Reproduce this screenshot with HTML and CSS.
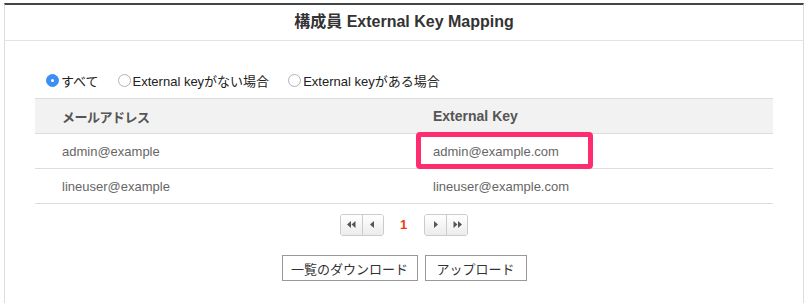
FILE: index.html
```html
<!DOCTYPE html>
<html lang="ja">
<head>
    <meta charset="UTF-8">
    <title>構成員 External Key Mapping</title>
    <link rel="stylesheet" href="styles.css">
</head>
<body>
    <div class="panel">
        <div class="panel-head">構成員 External Key Mapping</div>
        <div class="panel-body">
            <div class="filters">
                <label class="radio checked"><span class="dot"></span>すべて</label>
                <label class="radio"><span class="dot"></span>External keyがない場合</label>
                <label class="radio"><span class="dot"></span>External keyがある場合</label>
            </div>
            <table class="key-table">
                <thead>
                    <tr>
                        <th class="th-ja">メールアドレス</th>
                        <th>External Key</th>
                    </tr>
                </thead>
                <tbody>
                    <tr>
                        <td>admin@example</td>
                        <td class="marked"><span class="highlight"></span>admin@example.com</td>
                    </tr>
                    <tr>
                        <td>lineuser@example</td>
                        <td>lineuser@example.com</td>
                    </tr>
                </tbody>
            </table>
            <div class="pager">
                <div class="pager-group">
                    <button class="pg"><svg width="9" height="7" viewBox="0 0 9 7"><path d="M4 0 L0 3.5 L4 7 Z M8.5 0 L4.5 3.5 L8.5 7 Z" fill="#555"/></svg></button>
                    <button class="pg"><svg width="5" height="7" viewBox="0 0 5 7"><path d="M4 0 L0 3.5 L4 7 Z" fill="#555"/></svg></button>
                </div>
                <span class="page-num">1</span>
                <div class="pager-group">
                    <button class="pg"><svg width="5" height="7" viewBox="0 0 5 7"><path d="M1 0 L5 3.5 L1 7 Z" fill="#555"/></svg></button>
                    <button class="pg"><svg width="9" height="7" viewBox="0 0 9 7"><path d="M0.5 0 L4.5 3.5 L0.5 7 Z M5 0 L9 3.5 L5 7 Z" fill="#555"/></svg></button>
                </div>
            </div>
            <div class="actions">
                <button class="btn btn-download">一覧のダウンロード</button>
                <button class="btn btn-upload">アップロード</button>
            </div>
        </div>
    </div>
</body>
</html>
```

FILE: styles.css
```css
body {
    margin: 0;
    padding: 3px 0 0 4px;
    background: #fff;
    font-family: "Liberation Sans", "Noto Sans CJK JP", sans-serif;
    font-size: 13px;
    color: #333;
}
.panel {
    border-top: 2px solid #444;
    border-left: 1px solid #ddd;
    border-right: 1px solid #ddd;
    height: 300px;
    box-sizing: border-box;
}
.panel-head {
    height: 35px;
    line-height: 34px;
    border-bottom: 1px solid #e2e2e2;
    text-align: center;
    font-size: 16px;
    font-weight: bold;
    color: #333;
}
.panel-body {
    padding: 29px 30px 0;
}
.filters {
    display: flex;
    align-items: center;
    height: 20px;
    padding-left: 11px;
    margin-bottom: 8px;
}
.radio {
    display: flex;
    align-items: center;
    margin-right: 19px;
    color: #222;
}
.dot {
    width: 11px;
    height: 11px;
    border: 1px solid #b4b4b4;
    border-radius: 50%;
    margin-right: 2px;
    background: #fff;
    box-sizing: content-box;
}
.radio.checked .dot {
    background: #3b8ff5;
    border-color: #3b8ff5;
    position: relative;
}
.radio.checked .dot::after {
    content: "";
    position: absolute;
    left: 4px;
    top: 4px;
    width: 3px;
    height: 3px;
    border-radius: 50%;
    background: #fff;
}
.key-table {
    width: 100%;
    border-collapse: collapse;
}
.key-table th,
.key-table td {
    width: 50%;
    height: 34px;
    padding: 0 0 0 27px;
    text-align: left;
    border-bottom: 1px solid #ddd;
}
.key-table th + th,
.key-table td + td {
    padding-left: 29px;
}
.key-table th {
    background: #f2f2f2;
    border-top: 1px solid #ddd;
    color: #555;
    font-size: 14px;
    font-weight: bold;
}
.key-table th.th-ja {
    font-size: 13px;
    letter-spacing: -0.5px;
}
.key-table td {
    color: #666;
}
.key-table td.marked {
    position: relative;
}
.highlight {
    position: absolute;
    left: 12px;
    top: -2px;
    width: 177px;
    height: 37px;
    border: 5px solid #ff2d6f;
    border-radius: 4px;
    box-sizing: border-box;
}
.pager {
    display: flex;
    justify-content: center;
    align-items: center;
    margin-top: 10px;
    height: 21px;
}
.pager-group {
    display: flex;
    border: 1px solid #ccc;
    border-radius: 3px;
    overflow: hidden;
}
.pg {
    width: 21px;
    height: 20px;
    padding: 0;
    border: none;
    border-left: 1px solid #ccc;
    background: linear-gradient(#fff, #ececec);
    display: flex;
    align-items: center;
    justify-content: center;
}
.pg:first-child {
    border-left: none;
}
.page-num {
    margin: 0 17px 0 16px;
    color: #f0400a;
    font-weight: bold;
    font-size: 13px;
}
.actions {
    display: flex;
    justify-content: center;
    gap: 7px;
    margin-top: 20px;
}
.btn {
    height: 26px;
    padding: 0;
    border: 1px solid #999;
    background: #fff;
    font-family: "Liberation Sans", "Noto Sans CJK JP", sans-serif;
    font-size: 13px;
    color: #333;
}
.btn-download {
    width: 136px;
}
.btn-upload {
    width: 102px;
}
```
